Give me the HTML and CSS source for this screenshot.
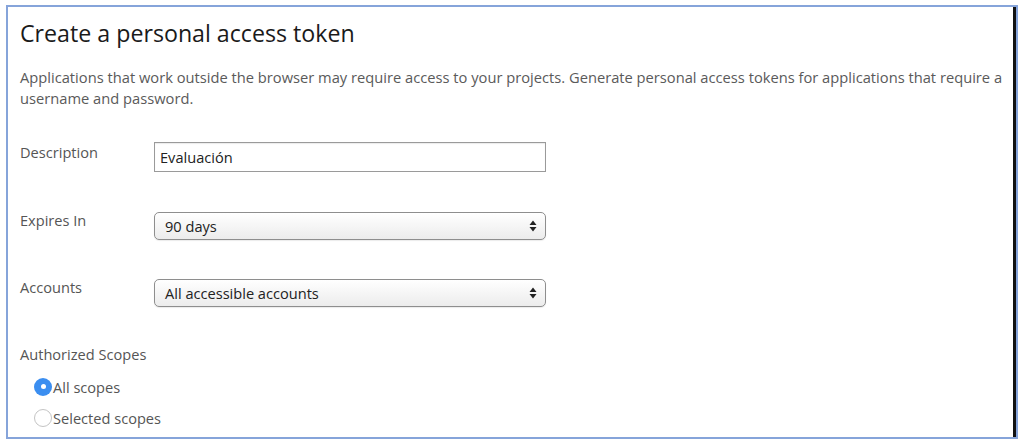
FILE: index.html
```html
<!DOCTYPE html>
<html>
<head>
<meta charset="utf-8">
<link rel="stylesheet" href="styles.css">
</head>
<body>
<div class="frame">
  <div class="panel">
    <h1 class="title">Create a personal access token</h1>
    <p class="intro">Applications that work outside the browser may require access to your projects. Generate personal access tokens for applications that require a username and password.</p>
    <div class="row row-desc">
      <div class="label">Description</div>
      <div class="field"><div class="input">Evaluación</div></div>
    </div>
    <div class="row row-sel">
      <div class="label">Expires In</div>
      <div class="field"><div class="select"><span>90 days</span><svg class="arrows" width="8" height="12" viewBox="0 0 8 12"><path d="M4 0.5 L7.5 5 L0.5 5 Z M4 11.5 L7.5 7 L0.5 7 Z" fill="#222"/></svg></div></div>
    </div>
    <div class="row row-sel">
      <div class="label">Accounts</div>
      <div class="field"><div class="select"><span>All accessible accounts</span><svg class="arrows" width="8" height="12" viewBox="0 0 8 12"><path d="M4 0.5 L7.5 5 L0.5 5 Z M4 11.5 L7.5 7 L0.5 7 Z" fill="#222"/></svg></div></div>
    </div>
    <div class="scopes-label">Authorized Scopes</div>
    <div class="radios">
      <div class="radio-row"><span class="radio checked"></span><span class="radio-text">All scopes</span></div>
      <div class="radio-row"><span class="radio"></span><span class="radio-text">Selected scopes</span></div>
    </div>
  </div>
</div>
</body>
</html>
```
FILE: styles.css
```css
html, body {
  margin: 0;
  padding: 0;
  background: #ffffff;
}
body {
  width: 1024px;
  height: 443px;
  overflow: hidden;
  font-family: "Open Sans", "Noto Sans", sans-serif;
}
.frame {
  margin: 5px 0 0 6px;
  width: 1008px;
  height: 430px;
  border: 2px solid #86a4da;
  box-sizing: content-box;
  overflow: hidden;
}
.panel {
  height: 100%;
  border-right: 3px solid #111;
  box-sizing: border-box;
  padding: 0 0 0 12px;
}
.title {
  margin: 0;
  padding-top: 11px;
  font-size: 23.2px;
  font-weight: 400;
  color: #1a1a1a;
  line-height: 30px;
}
.intro {
  margin: 19px 0 0 0;
  font-size: 14.7px;
  line-height: 21px;
  color: #5a5a5a;
  padding-right: 2px;
}
.row {
  display: flex;
  align-items: flex-start;
}
.row-desc { margin-top: 34px; height: 68px; }
.row-sel { height: 67px; }
.label {
  width: 134px;
  font-size: 14.6px;
  color: #555;
  line-height: 18px;
}
.field { width: 392px; }
.input {
  height: 30px;
  border: 1px solid #9a9a9a;
  box-sizing: border-box;
  padding: 0 5px;
  font-size: 14.6px;
  line-height: 28px;
  color: #222;
  margin-top: -1px;
  box-shadow: inset 0 1px 1px rgba(0,0,0,0.08);
}
.select {
  height: 28px;
  border: 1px solid #8e8e8e;
  border-radius: 5px;
  box-sizing: border-box;
  background: linear-gradient(#ffffff, #ececec);
  display: flex;
  align-items: center;
  justify-content: space-between;
  padding: 0 8px 0 10px;
  font-size: 14.6px;
  color: #222;
  margin-top: 1px;
  box-shadow: 0 1px 1px rgba(0,0,0,0.08);
}
.scopes-label {
  font-size: 14.6px;
  color: #555;
  line-height: 18px;
}
.radios { margin-top: 8px; padding-left: 14px; }
.radio-row {
  display: flex;
  align-items: center;
  height: 31px;
}
.radio {
  width: 18px;
  height: 18px;
  border-radius: 50%;
  border: 1px solid #c4c4c4;
  box-sizing: border-box;
  background: #fff;
  margin-right: 1px;
  position: relative;
  flex: none;
}
.radio.checked {
  border: none;
  background: #3b8ef0;
}
.radio.checked::after {
  content: "";
  position: absolute;
  left: 6.5px;
  top: 6.5px;
  width: 5px;
  height: 5px;
  border-radius: 50%;
  background: #fff;
}
.radio-text {
  font-size: 14.6px;
  color: #555;
}
```
